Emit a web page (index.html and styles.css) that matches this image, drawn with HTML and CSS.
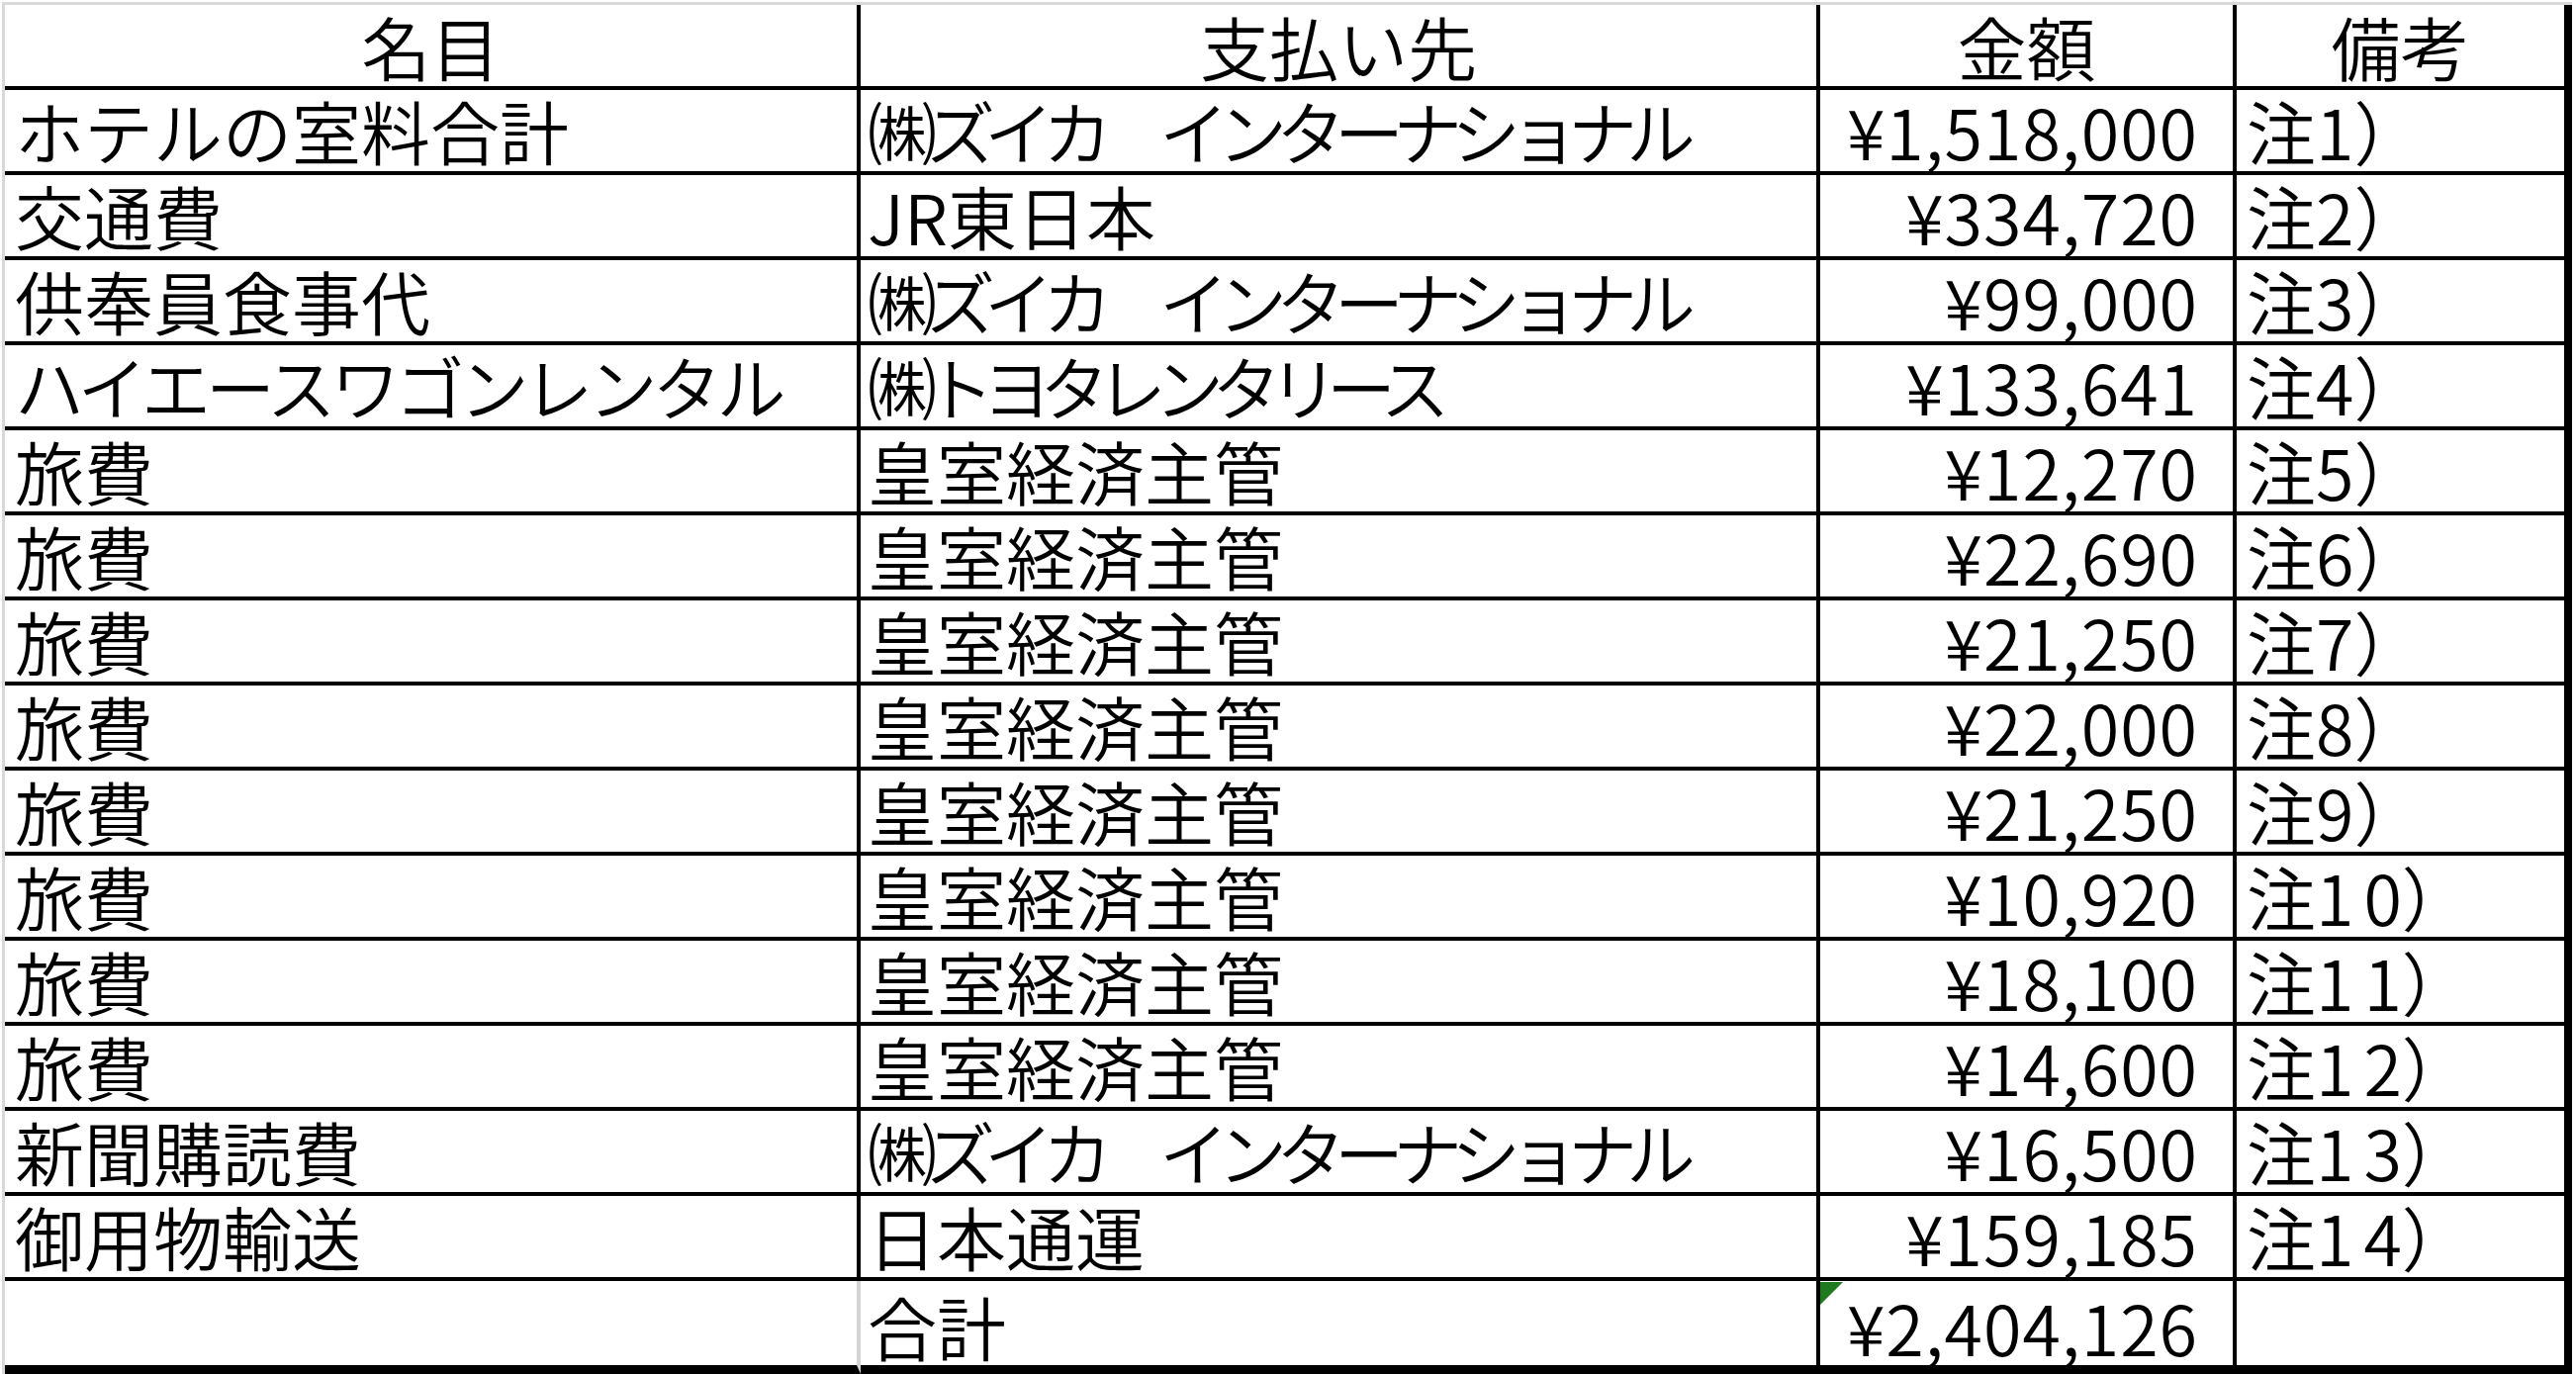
FILE: index.html
```html
<!DOCTYPE html>
<html lang="ja">
<head>
<meta charset="utf-8">
<title>支払い一覧</title>
<link rel="stylesheet" href="styles.css">
</head>
<body>
<div class="sheet">
  <div class="grid">
    <div class="cell head c1">名目</div>
    <div class="cell head c2">支払い先</div>
    <div class="cell head c3">金額</div>
    <div class="cell head c4">備考</div>

    <div class="cell c1">ホテルの室料合計</div>
    <div class="cell c2"><span class="pk">㈱ズイカ　インターナショナル</span></div>
    <div class="cell c3">¥1,518,000</div>
    <div class="cell c4">注1）</div>

    <div class="cell c1">交通費</div>
    <div class="cell c2">JR東日本</div>
    <div class="cell c3">¥334,720</div>
    <div class="cell c4">注2）</div>

    <div class="cell c1">供奉員食事代</div>
    <div class="cell c2"><span class="pk">㈱ズイカ　インターナショナル</span></div>
    <div class="cell c3">¥99,000</div>
    <div class="cell c4">注3）</div>

    <div class="cell c1"><span class="pk3">ハイエースワゴンレンタル</span></div>
    <div class="cell c2"><span class="pk2">㈱トヨタレンタリース</span></div>
    <div class="cell c3">¥133,641</div>
    <div class="cell c4">注4）</div>

    <div class="cell c1">旅費</div>
    <div class="cell c2">皇室経済主管</div>
    <div class="cell c3">¥12,270</div>
    <div class="cell c4">注5）</div>

    <div class="cell c1">旅費</div>
    <div class="cell c2">皇室経済主管</div>
    <div class="cell c3">¥22,690</div>
    <div class="cell c4">注6）</div>

    <div class="cell c1">旅費</div>
    <div class="cell c2">皇室経済主管</div>
    <div class="cell c3">¥21,250</div>
    <div class="cell c4">注7）</div>

    <div class="cell c1">旅費</div>
    <div class="cell c2">皇室経済主管</div>
    <div class="cell c3">¥22,000</div>
    <div class="cell c4">注8）</div>

    <div class="cell c1">旅費</div>
    <div class="cell c2">皇室経済主管</div>
    <div class="cell c3">¥21,250</div>
    <div class="cell c4">注9）</div>

    <div class="cell c1">旅費</div>
    <div class="cell c2">皇室経済主管</div>
    <div class="cell c3">¥10,920</div>
    <div class="cell c4">注<span class="d">1</span>0）</div>

    <div class="cell c1">旅費</div>
    <div class="cell c2">皇室経済主管</div>
    <div class="cell c3">¥18,100</div>
    <div class="cell c4">注<span class="d">1</span>1）</div>

    <div class="cell c1">旅費</div>
    <div class="cell c2">皇室経済主管</div>
    <div class="cell c3">¥14,600</div>
    <div class="cell c4">注<span class="d">1</span>2）</div>

    <div class="cell c1">新聞購読費</div>
    <div class="cell c2"><span class="pk">㈱ズイカ　インターナショナル</span></div>
    <div class="cell c3">¥16,500</div>
    <div class="cell c4">注<span class="d">1</span>3）</div>

    <div class="cell c1">御用物輸送</div>
    <div class="cell c2">日本通運</div>
    <div class="cell c3">¥159,185</div>
    <div class="cell c4">注<span class="d">1</span>4）</div>

    <div class="cell c1 total blank"></div>
    <div class="cell c2 total">合計</div>
    <div class="cell c3 total"><span class="flag"></span>¥2,404,126</div>
    <div class="cell c4 total"></div>
  </div>
</div>
</body>
</html>
```

FILE: styles.css
```css
html, body {
  margin: 0;
  padding: 0;
  background: #ffffff;
}

.sheet {
  width: 2604px;
  height: 1389px;
  box-sizing: border-box;
  padding: 2px 0 0 2px;
  background: #ffffff;
}

.grid {
  display: grid;
  grid-template-columns: 865px 970px 421px 339px;
  grid-template-rows: 86px repeat(14, 86px) 94px;
  border-top: 3px solid #d9d9d9;
  border-left: 3px solid #d9d9d9;
  width: max-content;
  font-family: "Noto Sans CJK JP", "Noto Sans", sans-serif;
  font-weight: 350;
  font-size: 70px;
  line-height: 70px;
  color: #000000;
}

.cell {
  box-sizing: border-box;
  display: flex;
  align-items: flex-end;
  padding-bottom: 6px;
  border-bottom: 4px solid #000000;
  border-right: 4px solid #000000;
  white-space: nowrap;
  position: relative;
}

.head {
  justify-content: center;
  padding-bottom: 5px;
}

.c1 { padding-left: 10px; }
.c2 { padding-left: 7px; }
.c3 { justify-content: flex-end; padding-right: 35px; letter-spacing: 1px; }
.c4 { padding-left: 10px; border-right-width: 8px; }

.head.c1, .head.c2, .head.c3, .head.c4 {
  padding-left: 0;
  padding-right: 0;
  letter-spacing: 0;
  justify-content: center;
}

.pk { letter-spacing: -11px; }
.pk2 { letter-spacing: -12px; }
.pk3 { letter-spacing: -5px; }

.d { margin-right: 10px; }

.total {
  border-bottom-width: 9px;
  padding-bottom: 4px;
}

.total.blank {
  border-right: 4px solid #d4d4d4;
}

.flag {
  position: absolute;
  top: 1px;
  left: 0;
  width: 0;
  height: 0;
  border-top: 23px solid #1f7a1f;
  border-right: 23px solid transparent;
}
```
